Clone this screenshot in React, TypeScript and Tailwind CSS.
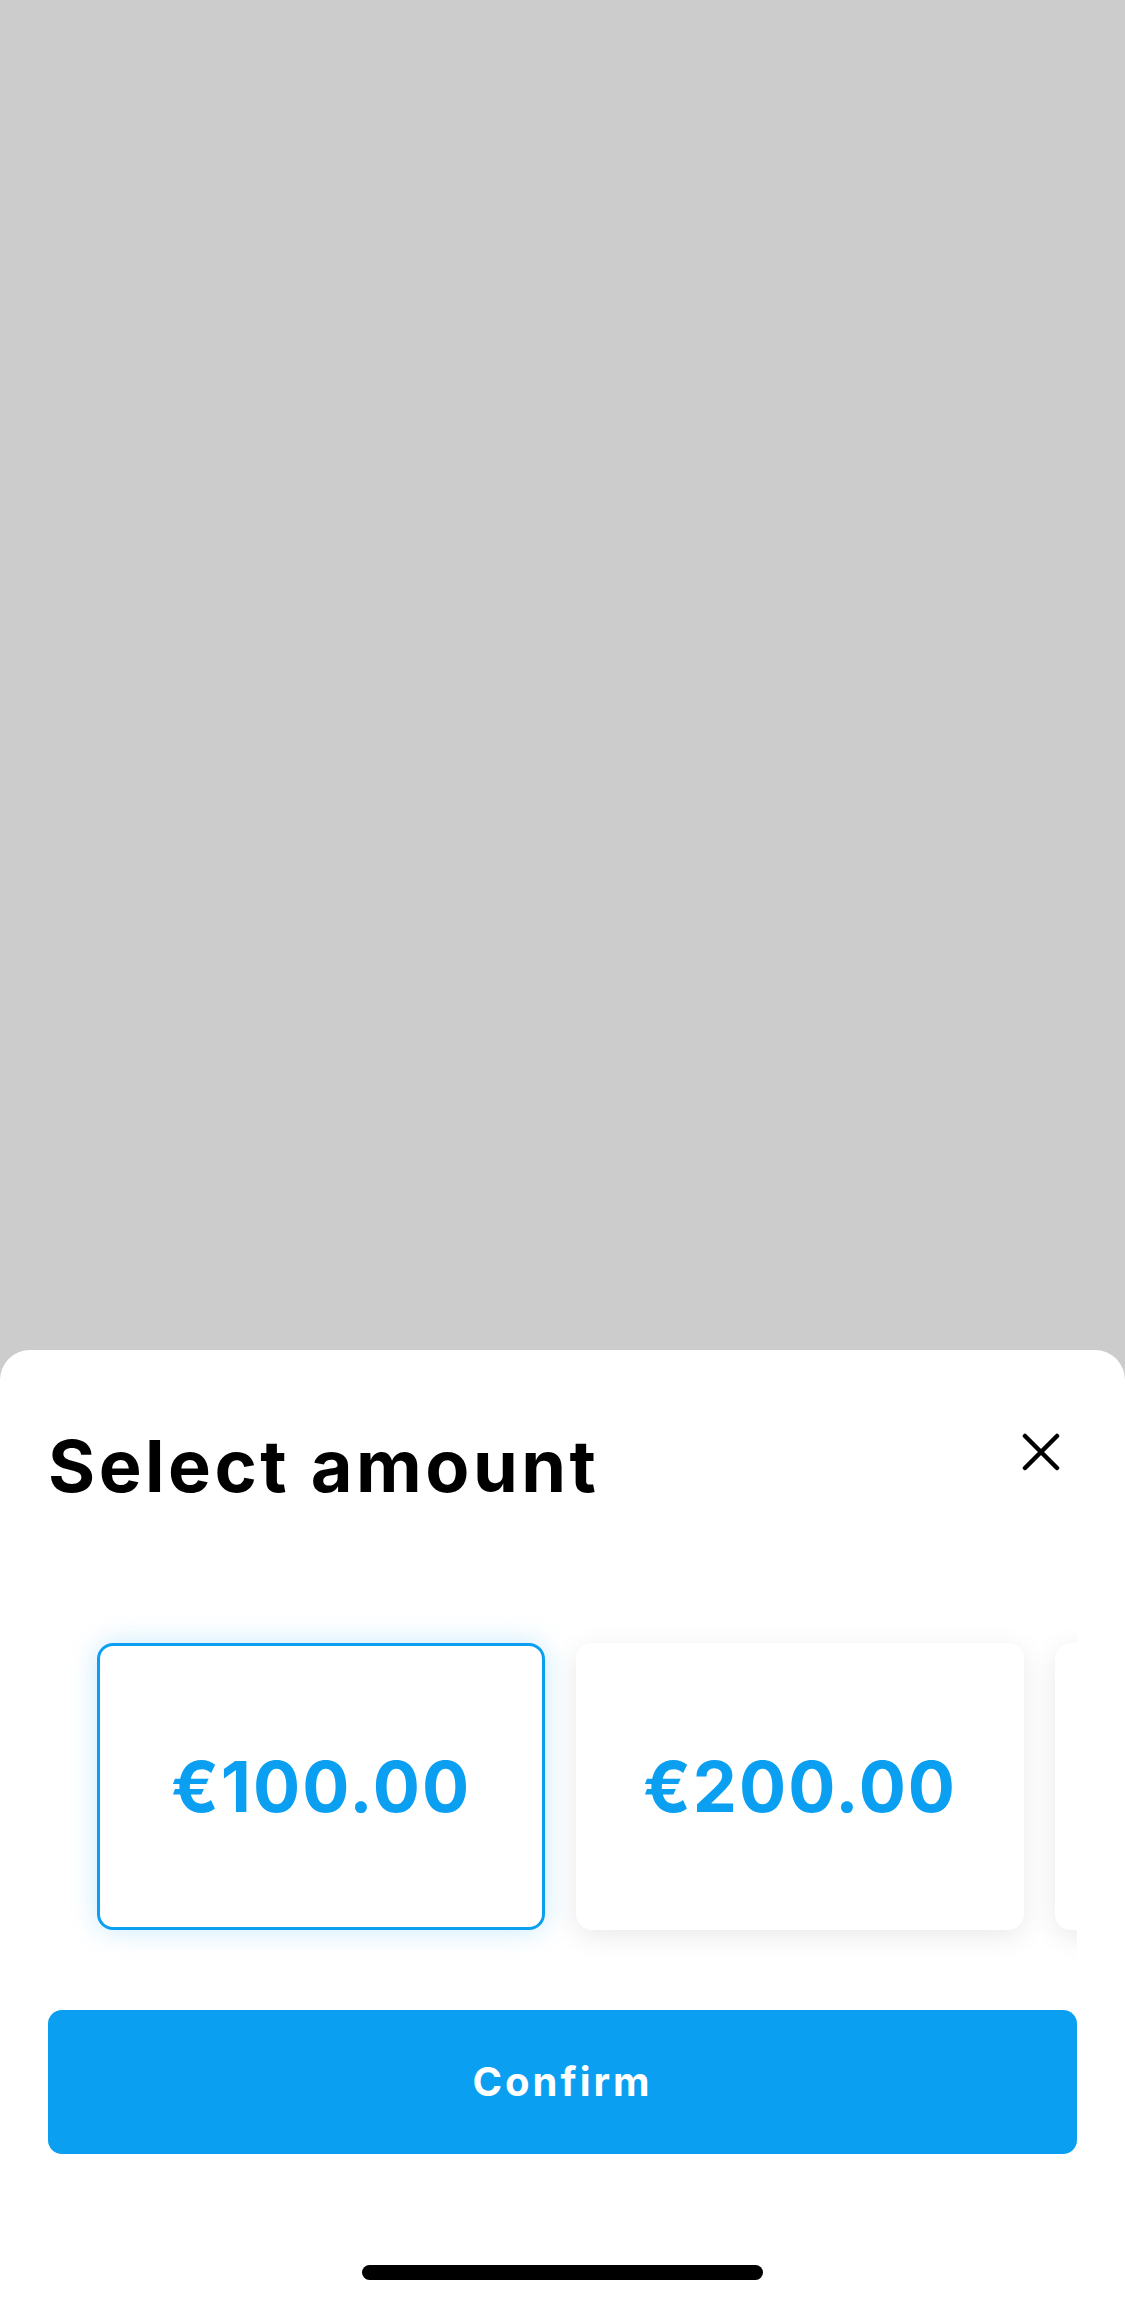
const amounts = ["€100.00", "€200.00", "€300.00"];

export default function App() {
  return (
    <div className="min-h-screen flex flex-col bg-[#cccccc] font-['Inter','Liberation_Sans',sans-serif]">
      <div className="flex-1" />

      {/* bottom sheet */}
      <div className="bg-white rounded-t-[30px] flex flex-col">
        <div className="flex items-start justify-between pl-[48px] pr-[65px] pt-[80px]">
          <h1 className="text-[72px] leading-[72px] font-bold text-black tracking-[3.5px]">Select amount</h1>
          <button className="mt-[3px]">
            <svg width="38" height="38" viewBox="0 0 38 38" fill="none">
              <path d="M3 3L35 35M35 3L3 35" stroke="black" strokeWidth="4.5" strokeLinecap="round" />
            </svg>
          </button>
        </div>

        <div className="mx-[48px] mt-[101px] overflow-hidden py-[40px]">
          <div className="flex gap-[31px] pl-[49px]">
            {amounts.map((a, i) => (
              <div
                key={a}
                className={
                  i === 0
                    ? "shrink-0 w-[448px] h-[287px] rounded-[16px] bg-white border-[3px] border-[#0b9ff2] shadow-[0_0_28px_rgba(11,159,242,0.22)] flex items-center justify-center"
                    : "shrink-0 w-[448px] h-[287px] rounded-[16px] bg-white shadow-[0_6px_28px_rgba(0,0,0,0.09)] flex items-center justify-center"
                }
              >
                <span className="text-[70px] font-bold text-[#0b9ff2] tracking-[2px]">{a}</span>
              </div>
            ))}
          </div>
        </div>

        <button className="mx-[48px] mt-[40px] h-[144px] rounded-[14px] bg-[#0b9ff2] text-white text-[40px] font-bold tracking-[3px]">
          Confirm
        </button>

        <div className="flex justify-center pt-[111px] pb-[24px]">
          <div className="w-[401px] h-[15px] rounded-full bg-black" />
        </div>
      </div>
    </div>
  );
}
